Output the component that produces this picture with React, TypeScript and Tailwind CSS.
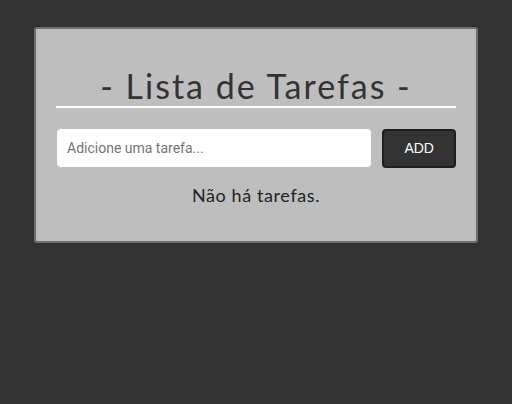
export default function App() {
  return (
    <div className="min-h-[404px] bg-[#333333] pt-[27px]" style={{ fontFamily: "Lato, 'Noto Sans', sans-serif" }}>
      <div className="mx-auto w-[444px] rounded-[3px] border-2 border-[#6e6e6e] bg-[#bebebe] px-[20px] pt-[38px] pb-[32px]">
        <h1 className="mx-auto w-[400px] border-b-2 border-white pb-[1px] text-center text-[34px] leading-[38px] tracking-[2px] text-[#333333]">
          - Lista de Tarefas -
        </h1>
        <div className="mt-[21px] flex gap-[11px] pl-[1px]">
          <input
            placeholder="Adicione uma tarefa..."
            className="h-[38px] w-[316px] rounded-[4px] bg-white px-[10px] text-[14px] text-[#333] outline-none placeholder:text-[#757575]"
            style={{ fontFamily: "Roboto, Arial, sans-serif" }}
          />
          <button
            className="h-[39px] w-[74px] rounded-[4px] border-2 border-[#1e1e1e] bg-[#333333] text-[14px] font-medium text-white"
            style={{ fontFamily: "'Liberation Sans', Arial, sans-serif" }}
          >
            ADD
          </button>
        </div>
        <p className="mt-[14px] text-center text-[18px] tracking-[0.6px] text-[#222]">Não há tarefas.</p>
      </div>
    </div>
  );
}
